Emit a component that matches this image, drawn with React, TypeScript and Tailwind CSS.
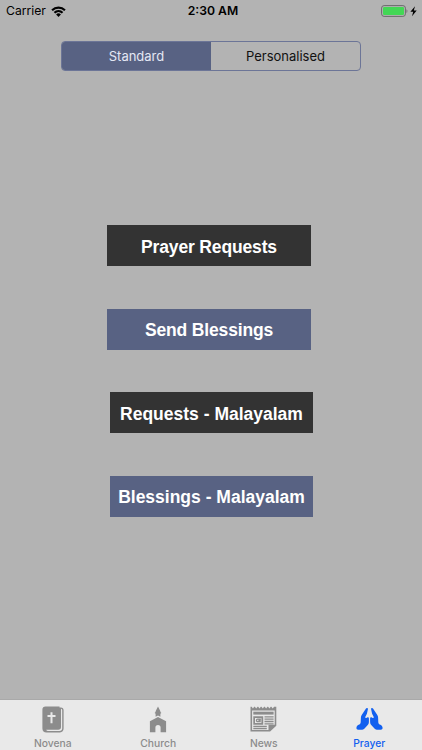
import { useState } from 'react'

const segments = ['Standard', 'Personalised']

function WifiIcon() {
  return (
    <svg width="15" height="11" viewBox="0 0 15 11">
      <path d="M.3 3.500a10.400 10.400 0 0 1 14.400 0l-1.500 1.600a8.200 8.200 0 0 0-11.400 0z" />
      <path d="M2.700 6a6.900 6.900 0 0 1 9.600 0l-1.500 1.500a4.800 4.800 0 0 0-6.600 0z" />
      <path d="M5.100 8.400a3.500 3.500 0 0 1 4.800 0L7.500 10.900z" />
    </svg>
  )
}

function BatteryIcon() {
  return (
    <svg width="37" height="13" viewBox="0 0 37 13">
      <rect x=".6" y=".6" width="23.800" height="10.800" rx="2.500" fill="none" stroke="#6b6b6b" />
      <rect x="2" y="2" width="21" height="8" rx="1.200" fill="#43d755" />
      <path d="M25.500 4.300c1.200.5 1.200 3.200 0 3.700z" fill="#6b6b6b" />
      <path d="M34 1.200L29.400 6.700h2.800l-1.200 4.500 4.700-5.700h-2.900z" fill="#000" />
    </svg>
  )
}

function BibleIcon() {
  return (
    <svg width="22" height="27" viewBox="0 0 22 27">
      <path
        fillRule="evenodd"
        d="M3.500.4h14v1.200h1.400c1.700 0 2.700 1 2.700 2.700v18.300c0 2.400-1.300 3.800-3.600 3.800H4.500C2 26.400.4 25 .4 22.500V3.500C.4 1.600 1.600.4 3.500.4zM19 2.700v18.200c0 1.800-1 2.800-2.800 2.800H4.200c.3.800.9 1.200 1.800 1.200h11.500c1.700 0 2.700-1 2.700-2.700V4.300c0-.9-.4-1.500-1.200-1.600z"
      />
      <path d="M9.500 6.300v11M5.500 10h8" stroke="#e9e9e9" strokeWidth="2" />
    </svg>
  )
}

function ChurchIcon() {
  return (
    <svg width="18" height="27" viewBox="0 0 18 27">
      <path d="M9 .4l2.400 4.800v1h.7v1.200h-.7v3.400L9 9.400l-2.400 1.400V7.400h-.7V6.200h.7v-1z" />
      <path d="M9 10.900l8.100 4.300v11h-5.500v-4.600a2.600 2.600 0 0 0-5.200 0v4.600H.9v-11z" />
    </svg>
  )
}

function NewsIcon() {
  return (
    <svg width="27" height="26" viewBox="0 0 27 26">
      <path
        fillRule="evenodd"
        d="M.5.8h1.200l1.200 1.700L4.200.8h.7l1.300 1.700L7.500.8h.7l1.300 1.700L10.800.8h.7l1.300 1.700L14.100.8h.7l1.300 1.700L17.400.8h.7l1.300 1.700L20.700.8h.7l1.300 1.700L24.100.8h2.200v18.900l-6.200 5.800H.5zM2.100 4.500v19.400h16.400v-5.200h6.200V4.500z"
      />
      <path d="M3.300 5.700h20.300v2.900H3.300z" />
      <path fillRule="evenodd" d="M3.300 10.200h9.900v8.600H3.300zM5 12.100v4.800h6.400v-4.800z" />
      <path d="M10.900 13.200H7.700a1.200 1.200 0 0 0 0 2.500h2.400v-1.200H8.400" fill="none" stroke="#8c8c8c" strokeWidth="1.300" />
      <path
        d="M14.500 10.900h9.100M14.500 13.200h9.100M14.500 15.500h9.100M14.500 17.800h9.100M3.300 20.500h13.500M3.300 22.700h13.500"
        stroke="#8c8c8c"
        strokeWidth="1.300"
      />
    </svg>
  )
}

// one hand, mirrored for the other side
const hand =
  'M10 1.500C10.600.5 12.100.8 11.900 2.200L10.900 6.700L9 10.500L10.400 11L11.200 10.500C11.800 9.900 12.900 10.300 12.900 11.300V14.800C12.900 16.600 12.300 17.700 11.300 18.600L8.300 21.700C7.400 22.500 6.600 22.800 5.500 22.800H2.300C.7 22.800.2 21.400.5 20.200C.9 18.900 1.800 18.100 3.100 17.600C4.300 17.100 4.700 16.200 4.700 15L4.900 10.500C4.900 9.500 5.200 8.800 5.700 8Z'

function PrayIcon() {
  return (
    <svg width="27" height="24" viewBox="0 0 27 24">
      <path d={hand} />
      <path d={hand} transform="matrix(-1 0 0 1 27 0)" />
    </svg>
  )
}

const tabs = [
  { name: 'Novena', icon: <BibleIcon /> },
  { name: 'Church', icon: <ChurchIcon /> },
  { name: 'News', icon: <NewsIcon /> },
  { name: 'Prayer', icon: <PrayIcon /> },
]

function App() {
  const [segment, setSegment] = useState('Standard')
  const [tab, setTab] = useState('Prayer')

  return (
    <main className="flex flex-col w-[422px] h-[750px] bg-[#b3b3b3] font-[Inter,sans-serif] text-black overflow-hidden">
      <header className="grid grid-cols-3 items-center h-[22px] shrink-0 pl-[6px] pr-[4px]">
        <div className="flex items-center gap-[5px] pt-px text-[12.2px]">
          <span>Carrier</span>
          <WifiIcon />
        </div>
        <div className="pt-px pl-[2px] text-center text-[12.2px] font-semibold">2:30 AM</div>
        <div className="flex justify-end">
          <BatteryIcon />
        </div>
      </header>

      <div className="flex self-center w-[300px] h-[30px] mt-[19px] shrink-0 border border-[#6c7597] rounded-[4px] overflow-hidden">
        {segments.map((name) => (
          <button
            key={name}
            className={`w-1/2 pt-px text-[13px] ${segment === name ? 'bg-[#586283] text-[#e4e7f4]' : 'text-[#111]'}`}
            onClick={() => setSegment(name)}
          >
            {name}
          </button>
        ))}
      </div>

      <div className="flex flex-col flex-1 pt-[154.4px] pl-[107px] gap-[42.7px] font-['Liberation_Sans',sans-serif] text-[17.5px] font-bold text-white">
        <button className="w-[204px] h-[40.8px] pt-[2px] shrink-0 bg-[#333] tracking-[-0.15px]">Prayer Requests</button>
        <button className="w-[204px] h-[40.8px] pt-[2px] shrink-0 bg-[#586283] tracking-[-0.15px]">Send Blessings</button>
        <button className="w-[203px] h-[40.8px] pt-[2px] shrink-0 ml-[3px] bg-[#333]">Requests - Malayalam</button>
        <button className="w-[203px] h-[40.8px] pt-[2px] shrink-0 ml-[3px] bg-[#586283]">Blessings - Malayalam</button>
      </div>

      <nav className="grid grid-cols-4 h-[51px] shrink-0 border-t border-[#a9a9a9] bg-[#e9e9e9]">
        {tabs.map(({ name, icon }) => (
          <button
            key={name}
            className={`flex flex-col items-center pt-[5px] text-[10.3px] leading-[13px] font-medium ${
              tab === name ? 'text-[#1260ef] fill-[#1260ef]' : 'text-[#8c8c8c] fill-[#8c8c8c]'
            }`}
            onClick={() => setTab(name)}
          >
            <span className="flex items-center justify-center h-[28px]">{icon}</span>
            <span className="mt-[4px]">{name}</span>
          </button>
        ))}
      </nav>
    </main>
  )
}

export default App
